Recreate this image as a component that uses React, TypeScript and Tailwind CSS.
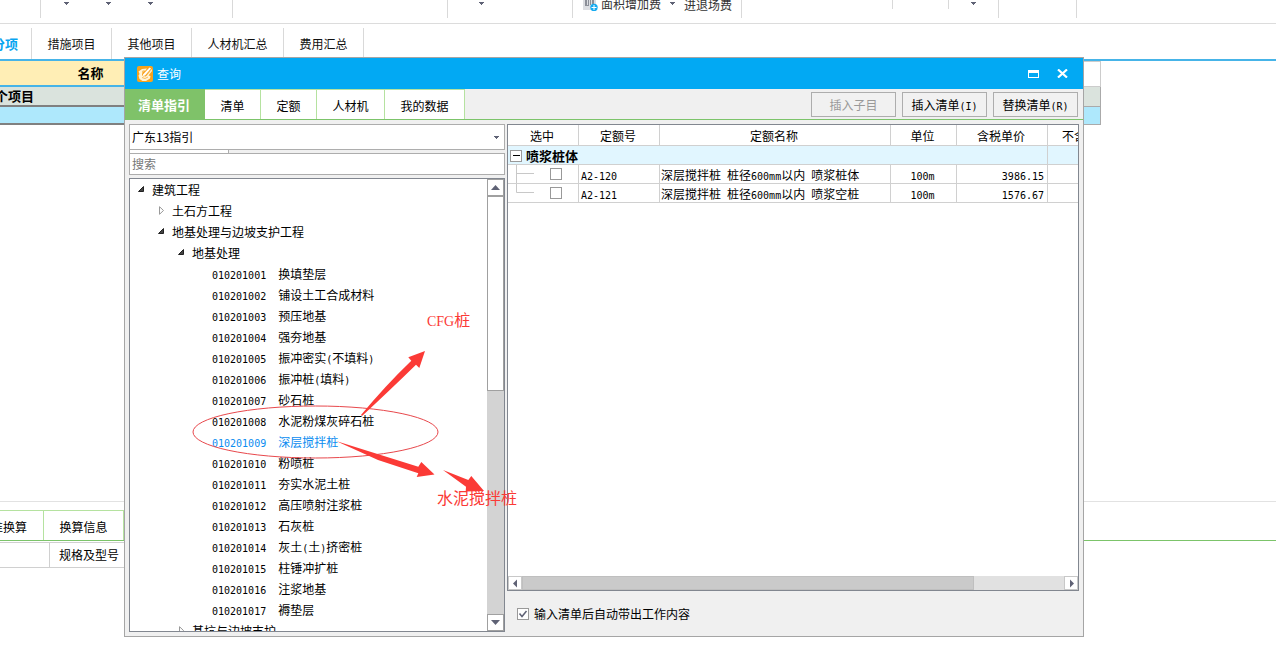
import type { ReactNode } from "react";

const cjk = "font-['Noto_Sans_CJK_SC',sans-serif]";

/** Chinese at the surrounding size, Latin runs in a half-width monospace. */
function Mixed({ children }: { children: string }) {
  return (
    <>
      {children.split(/([\x20-\x7e]+)/).map((part, i) =>
        i % 2 ? (
          <span key={i} className="whitespace-pre font-['DejaVu_Sans_Mono',monospace] text-[10px] leading-none">{part}</span>
        ) : (
          part
        ),
      )}
    </>
  );
}

function Caret({ className = "" }: { className?: string }) {
  return (
    <svg viewBox="0 0 5 3" className={`h-[3px] w-[5px] shrink-0 ${className}`} fill="#5f6275" shapeRendering="crispEdges">
      <path d="M0 0h5v1h-1v1h-1v1h-1v-1h-1v-1h-1z" />
    </svg>
  );
}

function ToolbarGroup({ className, children }: { className: string; children?: ReactNode }) {
  return <div className={`flex h-[18px] shrink-0 border-r border-[#d9d9d9] ${className}`}>{children}</div>;
}

function Toolbar() {
  return (
    <div className="flex h-6 overflow-hidden border-b border-[#dcdcdc] text-[12px] text-[#333]">
      <ToolbarGroup className="w-[41px]" />
      <ToolbarGroup className="w-48 gap-[37px] pl-[23px] pt-[2px]">
        <Caret />
        <Caret />
        <Caret />
      </ToolbarGroup>
      <ToolbarGroup className="w-[215px]" />
      <ToolbarGroup className="w-[125px] pl-[31px] pt-[2px]">
        <Caret />
      </ToolbarGroup>
      <ToolbarGroup className="w-[169px] pl-[9px]">
        <svg viewBox="0 0 16 11" className="h-[11px] w-4 shrink-0">
          <path d="M1 0h13v10H1z" fill="#dcdee2" />
          <path d="M3 0h2v5H3zM6 0h1v5H6zM8 0h1v5H8zM10 0h2v4h-2zM3 5h4v1H3z" fill="#8b8f98" />
          <circle cx="12" cy="7.500" r="3.700" fill="#14aaf0" />
          <path d="M9.500 7h5v1h-5zM11.500 5h1v5h-1z" fill="#fff" />
        </svg>
        <button className="-mt-[5px] ml-[3px] flex h-[18px] shrink-0 items-center">面积增加费</button>
        <Caret className="ml-[9px] mt-[2px]" />
        <button className="-mt-1 ml-[9px] flex h-[18px] shrink-0 items-center">进退场费</button>
      </ToolbarGroup>
      <div className="h-[9px] w-[151px] shrink-0 border-r border-[#d9d9d9]" />
      <div className="h-[9px] w-14 shrink-0 border-r border-[#d9d9d9]" />
      <ToolbarGroup className="w-[50px] pl-[22px] pt-[2px]">
        <Caret />
      </ToolbarGroup>
      <ToolbarGroup className="w-[78px]" />
    </div>
  );
}

function MainTabs() {
  const tab = "h-[31px] shrink-0 border-r border-[#d9d9d9] text-center";
  return (
    <nav className="flex h-[37px] items-end overflow-hidden border-b-2 border-[#46b4e8] text-[12px] text-[#111]">
      <button className={`${tab} w-8 text-[13px] font-bold text-[#08a5f0]`}>
        <span className="flex justify-end whitespace-nowrap pr-[13px]">分项</span>
      </button>
      <button className={`${tab} w-20`}>措施项目</button>
      <button className={`${tab} w-20`}>其他项目</button>
      <button className={`${tab} w-[92px]`}>人材机汇总</button>
      <button className={`${tab} w-20`}>费用汇总</button>
    </nav>
  );
}

function ProjectTable() {
  return (
    <table className="w-[1101px] table-fixed border-separate border-spacing-0 text-[13px] font-bold">
      <tbody>
        <tr className="h-[26px]">
          <th className="w-[181px] border-b-2 border-[#46b4e8] bg-[#ffeeb5] p-0">名称</th>
          <td className="border-y border-r border-[#ccc] bg-white p-0" />
        </tr>
        <tr className="h-5">
          <td className="border-b-2 border-[#808080] bg-[#dae3dd] p-0 leading-4">
            <span className="-ml-[5px]">个项目</span>
          </td>
          <td className="border-b border-r border-[#aaa] bg-[#dae3dd] p-0" />
        </tr>
        <tr className="h-[18px]">
          <td className="border-b-2 border-[#808080] bg-[#aee8fc] p-0" />
          <td className="border-b border-r border-[#aaa] bg-[#aee8fc] p-0" />
        </tr>
      </tbody>
    </table>
  );
}

function DetailPanel() {
  return (
    <section className="h-[159px] shrink-0 border-t border-[#e2e2e2] pt-2 text-[12px]">
      <div className="flex h-[31px] border-b border-[#7cc46a]">
        <button className="w-11 shrink-0 overflow-hidden border-r border-t border-[#b5e2a0] pt-[2px]">
          <span className="flex justify-end whitespace-nowrap pr-4">标准换算</span>
        </button>
        <button className="w-20 shrink-0 border-r border-t border-[#b5e2a0] pt-[2px]">换算信息</button>
      </div>
      <div className="mt-px flex h-[26px] w-[400px] border-y border-[#d0d0d0]">
        <div className="w-[50px] border-r border-[#d0d0d0]" />
        <div className="flex items-center pl-[9px]">规格及型号</div>
      </div>
    </section>
  );
}

type Node = { level: number; text: string; state?: "open" | "closed"; selected?: boolean };

const tree: Node[] = [
  { level: 0, text: "建筑工程", state: "open" },
  { level: 1, text: "土石方工程", state: "closed" },
  { level: 1, text: "地基处理与边坡支护工程", state: "open" },
  { level: 2, text: "地基处理", state: "open" },
  { level: 3, text: "010201001  换填垫层" },
  { level: 3, text: "010201002  铺设土工合成材料" },
  { level: 3, text: "010201003  预压地基" },
  { level: 3, text: "010201004  强夯地基" },
  { level: 3, text: "010201005  振冲密实(不填料)" },
  { level: 3, text: "010201006  振冲桩(填料)" },
  { level: 3, text: "010201007  砂石桩" },
  { level: 3, text: "010201008  水泥粉煤灰碎石桩" },
  { level: 3, text: "010201009  深层搅拌桩", selected: true },
  { level: 3, text: "010201010  粉喷桩" },
  { level: 3, text: "010201011  夯实水泥土桩" },
  { level: 3, text: "010201012  高压喷射注浆桩" },
  { level: 3, text: "010201013  石灰桩" },
  { level: 3, text: "010201014  灰土(土)挤密桩" },
  { level: 3, text: "010201015  柱锤冲扩桩" },
  { level: 3, text: "010201016  注浆地基" },
  { level: 3, text: "010201017  褥垫层" },
  { level: 2, text: "基坑与边坡支护", state: "closed" },
];

const indents = ["pl-[7px]", "pl-[27px]", "pl-[47px]", "pl-[67px]"];

function TreeArrow({ state }: { state?: "open" | "closed" }) {
  return (
    <svg viewBox="0 0 8 9" className="mr-[7px] h-[9px] w-2 shrink-0">
      {state === "open" && <path d="M6.500 1.500v5h-5z" fill="#444" stroke="#222" />}
      {state === "closed" && <path d="M2.500 .7v7.600l4-3.800z" fill="#fff" stroke="#999" />}
    </svg>
  );
}

function ArrowIcon({ d }: { d: string }) {
  return (
    <svg viewBox="0 0 9 9" className="h-[9px] w-[9px]" fill="#5f6275">
      <path d={d} />
    </svg>
  );
}

function TreePanel() {
  const box = "flex h-[17px] w-[17px] shrink-0 items-center justify-center border border-[#a0a0a0] bg-white";
  return (
    <div className="flex min-h-0 flex-1 overflow-hidden border border-[#828790] bg-white">
      <ul role="tree" className="min-w-0 flex-1">
        {tree.map((n) => (
          <li
            key={n.text}
            role="treeitem"
            aria-selected={!!n.selected}
            className={`flex h-[21px] items-center whitespace-nowrap ${indents[n.level]} ${n.selected ? "text-[#0a8cf0]" : ""}`}
          >
            <TreeArrow state={n.state} />
            <span>
              <Mixed>{n.text}</Mixed>
            </span>
          </li>
        ))}
      </ul>
      <div className="flex w-[17px] shrink-0 flex-col bg-[#d3d3d3]">
        <button aria-label="向上滚动" className={box}>
          <ArrowIcon d="M4.500 2l4.500 5H0z" />
        </button>
        <div className="h-[195px] border border-[#a0a0a0] bg-white" />
        <div className="flex-1" />
        <button aria-label="向下滚动" className={box}>
          <ArrowIcon d="M4.500 7L0 2h9z" />
        </button>
      </div>
    </div>
  );
}

const rows = [
  { code: "A2-120", name: "深层搅拌桩 桩径600mm以内 喷浆桩体", unit: "100m", price: "3986.15" },
  { code: "A2-121", name: "深层搅拌桩 桩径600mm以内 喷浆空桩", unit: "100m", price: "1576.67" },
];

function QuotaTable() {
  const line = "overflow-hidden whitespace-nowrap border-b border-[#d0d0d0]";
  const head = `${line} border-r p-0 pr-[2px] pt-px font-normal`;
  const cell = `${line} border-r p-0 pt-px`;
  return (
    <table className="w-full table-fixed border-separate border-spacing-0 text-[12px] leading-4">
      <thead>
        <tr className="h-[21px]">
          <th className={`${head} w-[71px]`}>选中</th>
          <th className={`${head} w-[81px]`}>定额号</th>
          <th className={head}>定额名称</th>
          <th className={`${head} w-[66px]`}>单位</th>
          <th className={`${head} w-[91px]`}>含税单价</th>
          <th className={`${line} w-[30px] p-0 pl-[14px] pt-px text-left font-normal`}>不含税单价</th>
        </tr>
      </thead>
      <tbody>
        <tr className="h-[19px] bg-[#e1f6ff]">
          <td colSpan={5} className={cell}>
            <div className="flex items-center pl-[2px] text-[13px] font-bold">
              <button aria-label="折叠" className="mr-1 flex h-3 w-3 items-center justify-center border border-[#999] bg-white">
                <span className="h-px w-[7px] bg-black" />
              </button>
              喷浆桩体
            </div>
          </td>
          <td className={line} />
        </tr>
        {rows.map((r, i) => (
          <tr key={r.code} className="h-[19px]">
            <td className={`${line} border-r p-0`}>
              <div className="flex h-[18px]">
                <svg viewBox="0 0 26 18" className="mr-4 h-[18px] w-[26px] shrink-0" stroke="#c8c8c8" fill="none">
                  <path d={i === 0 ? "M8.500 0v18M8.500 8.500H26" : "M8.500 0v8.500H26"} />
                </svg>
                <input
                  type="checkbox"
                  aria-label={r.code}
                  className="mt-[3px] h-3 w-3 appearance-none border border-[#999] bg-white"
                />
              </div>
            </td>
            <td className={`${cell} pl-[2px]`}>
              <Mixed>{r.code}</Mixed>
            </td>
            <td className={`${cell} pl-[1px]`}>
              <Mixed>{r.name}</Mixed>
            </td>
            <td className={`${cell} pr-[2px] text-center`}>
              <Mixed>{r.unit}</Mixed>
            </td>
            <td className={`${cell} pr-[3px] text-right`}>
              <Mixed>{r.price}</Mixed>
            </td>
            <td className={line} />
          </tr>
        ))}
      </tbody>
    </table>
  );
}

function QuotaPanel() {
  const arrow = "flex w-[14px] shrink-0 items-center justify-center border border-[#c8c8c8] bg-white";
  return (
    <div className="flex min-w-0 flex-1 flex-col">
      <div className="flex min-h-0 flex-1 flex-col border border-[#828790] bg-white">
        <div className="min-h-0 flex-1">
          <QuotaTable />
        </div>
        <div className="flex h-[14px] bg-[#e1e1e1]">
          <button aria-label="向左滚动" className={arrow}>
            <ArrowIcon d="M2 4.500L6 .5v8z" />
          </button>
          <div className="flex-1">
            <div className="h-full w-5/6 border border-[#bfbfbf] bg-[#cacaca]" />
          </div>
          <button aria-label="向右滚动" className={arrow}>
            <ArrowIcon d="M7 4.500L3 .5v8z" />
          </button>
        </div>
      </div>
      <label className="flex h-[45px] items-center gap-[5px] pl-[10px] text-[12px]">
        <span className="grid h-3 w-3">
          <input
            type="checkbox"
            defaultChecked
            className="peer col-start-1 row-start-1 h-3 w-3 appearance-none border border-[#999] bg-white"
          />
          <svg viewBox="0 0 12 12" className="pointer-events-none col-start-1 row-start-1 hidden h-3 w-3 peer-checked:block" fill="none" stroke="#5f6275" strokeWidth="1.500">
            <path d="M2.500 5.500l2.500 3 4.500-5.500" />
          </svg>
        </span>
        输入清单后自动带出工作内容
      </label>
    </div>
  );
}

function Annotations() {
  return (
    <div className="pointer-events-none absolute left-[67px] top-[254px] h-[205px] w-[330px] text-[16px] leading-5 text-[#fb3a36]">
      <svg viewBox="192 312 330 205" className="h-full w-full" fill="#fb3a36">
        <ellipse cx="315.500" cy="432" rx="122.500" ry="26" fill="none" stroke="#e8484c" />
        <path d="M361 415Q385 386 411.300 360.700L408.300 357.300 425 351 419.300 368 416 364.700Q388 392 362 416z" />
        <path d="M336 441L418.300 466.700 421.300 462 434.500 474.500 416.700 477 418.300 473.300 378 460z" />
        <path d="M443 470L468.300 480 471.300 476 484 491 465.700 491.500 466 486.700z" />
      </svg>
      <span className="absolute left-[235px] top-[-3px] whitespace-nowrap">
        <span className="font-['Liberation_Serif',serif] text-[14px]">CFG</span>桩
      </span>
      <span className="absolute left-[245px] top-[175px] whitespace-nowrap">水泥搅拌桩</span>
    </div>
  );
}

function QueryDialog() {
  const tab = "shrink-0 border-r border-t border-[#b5e2a0] bg-white pt-[2px]";
  const action = "h-[25px] w-[85px] shrink-0 border border-[#adadad] bg-[#f1f1f1] pt-px";
  return (
    <div role="dialog" aria-label="查询" className="absolute bottom-[23px] left-[124px] right-[192px] top-[57px] flex min-w-[800px] flex-col border border-[#a5a5a5] bg-[#f0f0f0] text-[12px]">
      <header className="flex h-[31px] shrink-0 items-center bg-[#02a9f3] pl-3 pr-[15px] text-white">
        <svg viewBox="0 0 16 16" className="h-4 w-4">
          <rect width="16" height="16" rx="2" fill="#f9a21b" />
          <path d="M1.500 5.500L5 3l5-.5-1.500 2L5.500 6 5 9l1.500 1.500L9 10l5.500-7 .5 2-3.500 4.500 2 .5-.5 2.500-4 2.500H5.500L2.500 13l-1-3.500 1-1.500z" fill="#fff3d6" />
          <path d="M6 8.500L12.500 1.500l1.500 1L8 9.500l-2 .5z" fill="#fff" />
          <path d="M5 5.500l2.500-1M8.500 10.500l5-6M5 11.500l3 1 3-1.500" fill="none" stroke="#f3ab3c" strokeWidth=".8" />
        </svg>
        <h1 className="ml-1 flex-1">查询</h1>
        <button aria-label="最大化" className="mr-[18px]">
          <svg viewBox="0 0 11 8" className="h-2 w-[11px]" fill="#fff" shapeRendering="crispEdges">
            <path d="M0 0h11v8H0zM1 3v4h9V3z" fillRule="evenodd" />
          </svg>
        </button>
        <button aria-label="关闭">
          <svg viewBox="0 0 11 9" className="h-[9px] w-[11px]" stroke="#fff" strokeWidth="2.200">
            <path d="M1 .5l9 8M10 .5l-9 8" />
          </svg>
        </button>
      </header>
      <div className="flex h-[31px] shrink-0 border-b border-[#7cc46a]">
        <button className="w-20 shrink-0 bg-[#7fc269] pr-[2px] pt-px text-[13px] font-bold text-white">清单指引</button>
        <button className={`${tab} w-14`}>清单</button>
        <button className={`${tab} w-14`}>定额</button>
        <button className={`${tab} w-[68px]`}>人材机</button>
        <button className={`${tab} w-20`}>我的数据</button>
        <div className="flex flex-1 items-center justify-end gap-[6px] pr-[5px]">
          <button disabled className={`${action} text-[#999]`}>插入子目</button>
          <button className={action}>
            <Mixed>插入清单(I)</Mixed>
          </button>
          <button className={action}>
            <Mixed>替换清单(R)</Mixed>
          </button>
        </div>
      </div>
      <div className="flex min-h-0 flex-1 gap-[2px] px-1 pt-1">
        <div className="mb-1 flex w-[376px] shrink-0 flex-col">
          <div className="grid h-[26px] shrink-0 items-center border border-[#adadad] bg-white">
            <select aria-label="指引" className="col-start-1 row-start-1 h-6 appearance-none bg-transparent pl-[2px]">
              <option>广东13指引</option>
            </select>
            <Caret className="pointer-events-none col-start-1 row-start-1 mr-[5px] justify-self-end" />
          </div>
          <div className="h-[3px] w-[100px] shrink-0 border-x border-[#adadad] bg-white" />
          <input
            aria-label="搜索"
            placeholder="搜索"
            className="h-[22px] shrink-0 border border-[#adadad] bg-white pb-px pl-[2px] placeholder:text-[#777]"
          />
          <div className="mt-[3px] flex min-h-0 flex-1">
            <TreePanel />
          </div>
        </div>
        <QuotaPanel />
      </div>
      <Annotations />
    </div>
  );
}

export default function App() {
  return (
    <div className={`relative flex h-screen min-h-[600px] flex-col overflow-hidden bg-white text-black ${cjk}`}>
      <Toolbar />
      <MainTabs />
      <main className="min-h-0 flex-1 overflow-hidden">
        <ProjectTable />
      </main>
      <DetailPanel />
      <QueryDialog />
    </div>
  );
}
